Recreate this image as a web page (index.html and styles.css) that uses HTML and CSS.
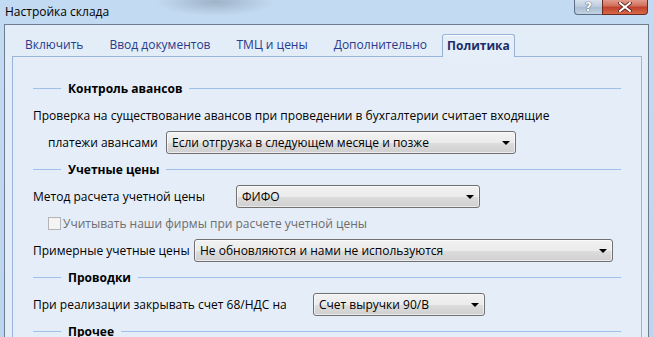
FILE: index.html
```html
<!DOCTYPE html>
<html lang="ru">
<head>
  <meta charset="UTF-8">
  <title>Настройка склада</title>
  <link rel="stylesheet" href="styles.css">
</head>
<body>
  <div class="window">
    <!-- Title bar -->
    <div class="titlebar">
      <span class="title">Настройка склада</span>
      <div class="caption-buttons">
        <span class="btn-help">?</span>
        <span class="btn-close">
          <svg width="14" height="10" viewBox="0 0 14 10">
            <path d="M2 1 L12 9 M12 1 L2 9" stroke="#5a1c14" stroke-width="3.6" stroke-linecap="square"/>
            <path d="M2 1 L12 9 M12 1 L2 9" stroke="#fff" stroke-width="2" stroke-linecap="square"/>
          </svg>
        </span>
      </div>
    </div>

    <div class="client">
      <!-- Tabs -->
      <div class="tabs">
        <div class="tab">Включить</div>
        <div class="tab">Ввод документов</div>
        <div class="tab">ТМЦ и цены</div>
        <div class="tab">Дополнительно</div>
        <div class="tab active">Политика</div>
      </div>

      <div class="panel">
        <div class="section">Контроль авансов</div>
        <div class="row">Проверка на существование авансов при проведении в бухгалтерии считает входящие</div>
        <div class="row">
          <span class="label label-advance">платежи авансами</span>
          <div class="combo combo-advance">Если отгрузка в следующем месяце и позже</div>
        </div>

        <div class="section">Учетные цены</div>
        <div class="row">
          <span class="label label-method">Метод расчета учетной цены</span>
          <div class="combo combo-method">ФИФО</div>
        </div>
        <div class="row">
          <label class="check disabled"><span class="box"></span>Учитывать наши фирмы при расчете учетной цены</label>
        </div>
        <div class="row">
          <span class="label label-approx">Примерные учетные цены</span>
          <div class="combo combo-approx">Не обновляются и нами не используются</div>
        </div>

        <div class="section">Проводки</div>
        <div class="row">
          <span class="label label-vat">При реализации закрывать счет 68/НДС на</span>
          <div class="combo combo-vat">Счет выручки 90/В</div>
        </div>

        <div class="section">Прочее</div>
      </div>
    </div>
  </div>
</body>
</html>
```

FILE: styles.css
```css
/* Reset & Base */
* {
  box-sizing: border-box;
  margin: 0;
  padding: 0;
}
body {
  width: 653px;
  height: 337px;
  overflow: hidden;
  font-family: "Open Sans", "Noto Sans", sans-serif;
  font-size: 12px;
  color: #000;
}

/* Window frame */
.window {
  height: 337px;
  padding: 0 4px;
  background: radial-gradient(ellipse 60px 14px at 215px 2px, #9fb3c8, rgba(191, 215, 240, 0)),
              linear-gradient(#c3dbf2, #bcd5ee);
  display: flex;
  flex-direction: column;
  overflow: hidden;
}
.titlebar {
  height: 24px;
  flex-shrink: 0;
  display: flex;
  justify-content: space-between;
  align-items: flex-start;
}
.title {
  padding: 3px 0 0 1px;
  font-size: 12px;
  line-height: 18px;
  color: #000;
}
.caption-buttons {
  display: flex;
  margin-right: 1px;
}
.btn-help,
.btn-close {
  height: 16px;
  margin-top: -1px;
  display: flex;
  align-items: center;
  justify-content: center;
  border: 1px solid #5d6e84;
  border-top: none;
}
.btn-help {
  width: 28px;
  border-right: none;
  border-radius: 0 0 0 4px;
  background: linear-gradient(#dbe6f1, #bccbdc 50%, #a9bbd0 51%, #c2d2e3);
  font-family: "DejaVu Sans", sans-serif;
  font-weight: bold;
  font-size: 12px;
  color: #fff;
  text-shadow: 0 0 1px #3a4a60, 0 0 1px #3a4a60;
}
.btn-close {
  width: 46px;
  border-radius: 0 0 4px 0;
  border-color: #6e2a22;
  background: linear-gradient(#e3a292, #d2705e 45%, #c0412c 55%, #d66a48);
}

/* Client area */
.client {
  flex: 1;
  min-height: 0;
  overflow: hidden;
  background: #e3edf7;
  border: 1px solid #6d7c8e;
  border-bottom: none;
  padding: 9px 6px 0 7px;
  display: flex;
  flex-direction: column;
}

/* Tabs */
.tabs {
  display: flex;
  flex-shrink: 0;
  height: 23px;
  margin-bottom: -1px;
}
.tab {
  padding: 0 13px;
  line-height: 22px;
  color: #293a8c;
}
.tab.active {
  position: relative;
  z-index: 1;
  margin-left: 2px;
  padding: 0 4px;
  font-weight: bold;
  color: #1b2d6a;
  background: #e6eff8;
  border: 1px solid #98b2d3;
  border-bottom: none;
  border-radius: 3px 3px 0 0;
  box-shadow: inset 0 1px 0 #fbfdff;
}

.panel {
  flex: 1;
  min-height: 0;
  border: 1px solid #99b5dc;
  border-bottom: none;
  background: #e5eef8;
  padding: 18px 20px 0 20px;
}

/* Section header with lines */
.section {
  height: 27px;
  display: flex;
  align-items: center;
  gap: 7px;
  font-weight: bold;
}
.section::before,
.section::after {
  content: "";
  height: 1px;
  background: #9fc0ea;
}
.section::before {
  width: 28px;
}
.section::after {
  flex: 1;
}

/* Rows */
.row {
  height: 27px;
  display: flex;
  align-items: center;
  white-space: nowrap;
}
.label {
  flex-shrink: 0;
}
.label-advance { margin-left: 15px; width: 118px; }
.label-method { width: 203px; }
.label-approx { width: 161px; }
.label-vat { width: 280px; }

/* Combo box */
.combo {
  position: relative;
  flex-shrink: 0;
  height: 23px;
  padding: 0 20px 0 5px;
  line-height: 21px;
  border: 1px solid #707070;
  border-radius: 3px;
  background: linear-gradient(#f2f2f2, #ebebeb 50%, #dddddd 51%, #cfcfcf);
  box-shadow: inset 0 0 0 1px rgba(255, 255, 255, 0.6);
}
.combo::after {
  content: "";
  position: absolute;
  right: 5px;
  top: 9px;
  border-left: 4px solid transparent;
  border-right: 4px solid transparent;
  border-top: 4px solid #000;
}
.combo-advance { width: 350px; }
.combo-method { width: 244px; }
.combo-approx { width: 419px; }
.combo-vat { width: 172px; }

/* Checkbox */
.check {
  display: flex;
  align-items: center;
  margin-left: 15px;
  gap: 2px;
}
.check .box {
  width: 13px;
  height: 13px;
  border: 1px solid #b4b4b4;
  background: #f4f4f4;
}
.check.disabled {
  color: #6d6d6d;
}
```
